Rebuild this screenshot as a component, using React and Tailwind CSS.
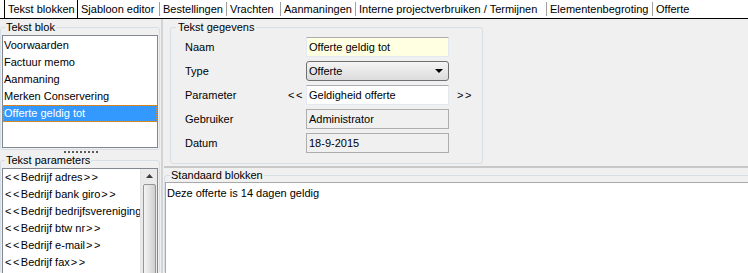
import React from "react";

const tabs = [
  { label: "Tekst blokken", w: "w-[74px]", active: true },
  { label: "Sjabloon editor", w: "w-[81px]" },
  { label: "Bestellingen", w: "w-[66px]" },
  { label: "Vrachten", w: "w-[53px]" },
  { label: "Aanmaningen", w: "w-[74px]" },
  { label: "Interne projectverbruiken / Termijnen", w: "w-[190px]" },
  { label: "Elementenbegroting", w: "w-[105px]" },
  { label: "Offerte", w: "w-[60px]", last: true },
];

const blocks = ["Voorwaarden", "Factuur memo", "Aanmaning", "Merken Conservering", "Offerte geldig tot"];
const params = [
  { name: "Bedrijf adres", close: true },
  { name: "Bedrijf bank giro", close: true },
  { name: "Bedrijf bedrijfsvereniging", close: true },
  { name: "Bedrijf btw nr", close: true },
  { name: "Bedrijf e-mail", close: true },
  { name: "Bedrijf fax", close: true },
];

function TabBar() {
  return (
    <div className="flex h-[19px] bg-white border-b border-black pl-[4px]">
      {tabs.map((t) =>
        t.active ? (
          <div
            key={t.label}
            className={`${t.w} h-[18px] shrink-0 border-l border-r border-black bg-white pl-[3px] flex items-center whitespace-nowrap`}
          >
            {t.label}
          </div>
        ) : (
          <React.Fragment key={t.label}>
            <div className={`${t.w} h-[18px] shrink-0 pl-[3px] flex items-center whitespace-nowrap`}>{t.label}</div>
            {!t.last && <div className="w-px h-[14px] mt-[2px] bg-[#a0a0a0] shrink-0" />}
          </React.Fragment>
        )
      )}
    </div>
  );
}

function Field({ label, children, left, right }) {
  return (
    <div className="flex items-center h-[20px]">
      <div className="w-[103px] shrink-0">{label}</div>
      <div className="w-[18px] shrink-0">{left}</div>
      {children}
      {right && <div className="ml-[8px]">{right}</div>}
    </div>
  );
}

export default function App() {
  return (
    <div className="w-[748px] h-[273px] overflow-hidden bg-[#f0f0f0] text-black text-[11px] leading-[13px] font-['Liberation_Sans',Arial,sans-serif]">
      <TabBar />
      <div className="flex h-[254px]">
        {/* Left column */}
        <div className="w-[160px] shrink-0 flex flex-col min-w-0">
          <fieldset className="min-w-0 mt-[2px] border border-[#d5dfe5] rounded-[3px] px-[1px] pb-[1px]">
            <legend className="ml-[3px] px-[1px]">Tekst blok</legend>
            <div className="mt-[1px] h-[113px] bg-white border border-[#828790] pt-[1px]">
              {blocks.map((b, i) =>
                i === blocks.length - 1 ? (
                  <div
                    key={b}
                    className="h-[17px] flex items-center pl-[1px] bg-[#3399ff] text-white outline-1 outline-dotted outline-[#e0902f] -outline-offset-1"
                  >
                    {b}
                  </div>
                ) : (
                  <div key={b} className="h-[17px] flex items-center pl-[1px]">
                    {b}
                  </div>
                )
              )}
            </div>
          </fieldset>
          <div className="h-[4px] flex justify-center items-center gap-[2px] pl-[1px]">
            {Array.from({ length: 9 }).map((_, i) => (
              <span key={i} className="w-[2px] h-[2px] bg-[#5a5a5a]" />
            ))}
          </div>
          <fieldset className="min-w-0 flex-1 border border-[#d5dfe5] rounded-[3px] px-[1px] min-h-0">
            <legend className="ml-[3px] px-[1px]">Tekst parameters</legend>
            <div className="mt-[1px] h-[120px] bg-white border border-[#828790] flex overflow-hidden">
              <div className="flex-1 min-w-0 overflow-hidden whitespace-nowrap">
                {params.map((p) => (
                  <div key={p.name} className="h-[17px] flex items-center pl-[2px]">
                    <span className="tracking-[1.5px]">&lt;&lt;</span>
                    <span>{p.name}</span>
                    <span className="tracking-[1.5px] ml-[1px]">&gt;&gt;</span>
                  </div>
                ))}
              </div>
              <div className="w-[17px] shrink-0 bg-[#eaeaea] border-l border-[#e3e3e3] flex flex-col items-center">
                <div className="h-[17px] w-full flex items-center justify-center">
                  <svg width="7" height="4" viewBox="0 0 7 4">
                    <path d="M3.5 0 L7 4 L0 4 Z" fill="#3c3c3c" />
                  </svg>
                </div>
                <div className="w-[13px] h-[120px] rounded-[2px] border border-[#959595] bg-gradient-to-r from-[#f4f4f4] via-[#e2e2e2] to-[#cfcfcf]" />
              </div>
            </div>
          </fieldset>
        </div>

        {/* Vertical splitter */}
        <div className="w-[4px] shrink-0 flex">
          <div className="ml-[1px] w-[2px] bg-[#d4d4d4]" />
        </div>

        {/* Right column */}
        <div className="flex-1 flex flex-col min-w-0">
          <div className="h-[146px] shrink-0 pl-[6px] pt-[2px]">
            <fieldset className="min-w-0 w-[313px] h-[143px] border border-[#d5dfe5] rounded-[3px]">
              <legend className="ml-[5px] px-[2px]">Tekst gegevens</legend>
              <div className="pl-[14px] pt-[3px] flex flex-col gap-[4px]">
                <Field label="Naam">
                  <div className="w-[143px] h-[20px] bg-[#ffffe1] border border-[#e3e9ef] border-t-[#abadb3] pl-[2px] flex items-center">
                    Offerte geldig tot
                  </div>
                </Field>
                <Field label="Type">
                  <div className="w-[143px] h-[20px] rounded-[3px] border border-[#707070] bg-gradient-to-b from-[#f4f4f4] to-[#dcdcdc] pl-[2px] pr-[5px] flex items-center justify-between">
                    <span>Offerte</span>
                    <svg width="8" height="4" viewBox="0 0 8 4">
                      <path d="M0 0 L8 0 L4 4 Z" fill="#000" />
                    </svg>
                  </div>
                </Field>
                <Field
                  label="Parameter"
                  left={<span className="tracking-[1.5px]">&lt;&lt;</span>}
                  right={<span className="tracking-[1.5px]">&gt;&gt;</span>}
                >
                  <div className="w-[143px] h-[20px] bg-white border border-[#e3e9ef] border-t-[#abadb3] pl-[2px] flex items-center">
                    Geldigheid offerte
                  </div>
                </Field>
                <Field label="Gebruiker">
                  <div className="w-[143px] h-[20px] bg-[#f0f0f0] border border-[#adadad] pl-[2px] flex items-center">
                    Administrator
                  </div>
                </Field>
                <Field label="Datum">
                  <div className="w-[143px] h-[20px] bg-[#f0f0f0] border border-[#adadad] pl-[2px] flex items-center">
                    18-9-2015
                  </div>
                </Field>
              </div>
            </fieldset>
          </div>
          <div className="h-[4px] shrink-0 flex flex-col justify-center">
            <div className="h-[2px] bg-[#c8c8c8]" />
          </div>
          <fieldset className="min-w-0 w-[620px] flex-1 border border-[#d5dfe5] rounded-[3px] min-h-0">
            <legend className="ml-[5px] px-[1px]">Standaard blokken</legend>
            <div className="h-[120px] bg-white border-t border-l border-[#a9a9a9] pl-[1px] pt-[4px]">
              Deze offerte is 14 dagen geldig
            </div>
          </fieldset>
        </div>
      </div>
    </div>
  );
}
